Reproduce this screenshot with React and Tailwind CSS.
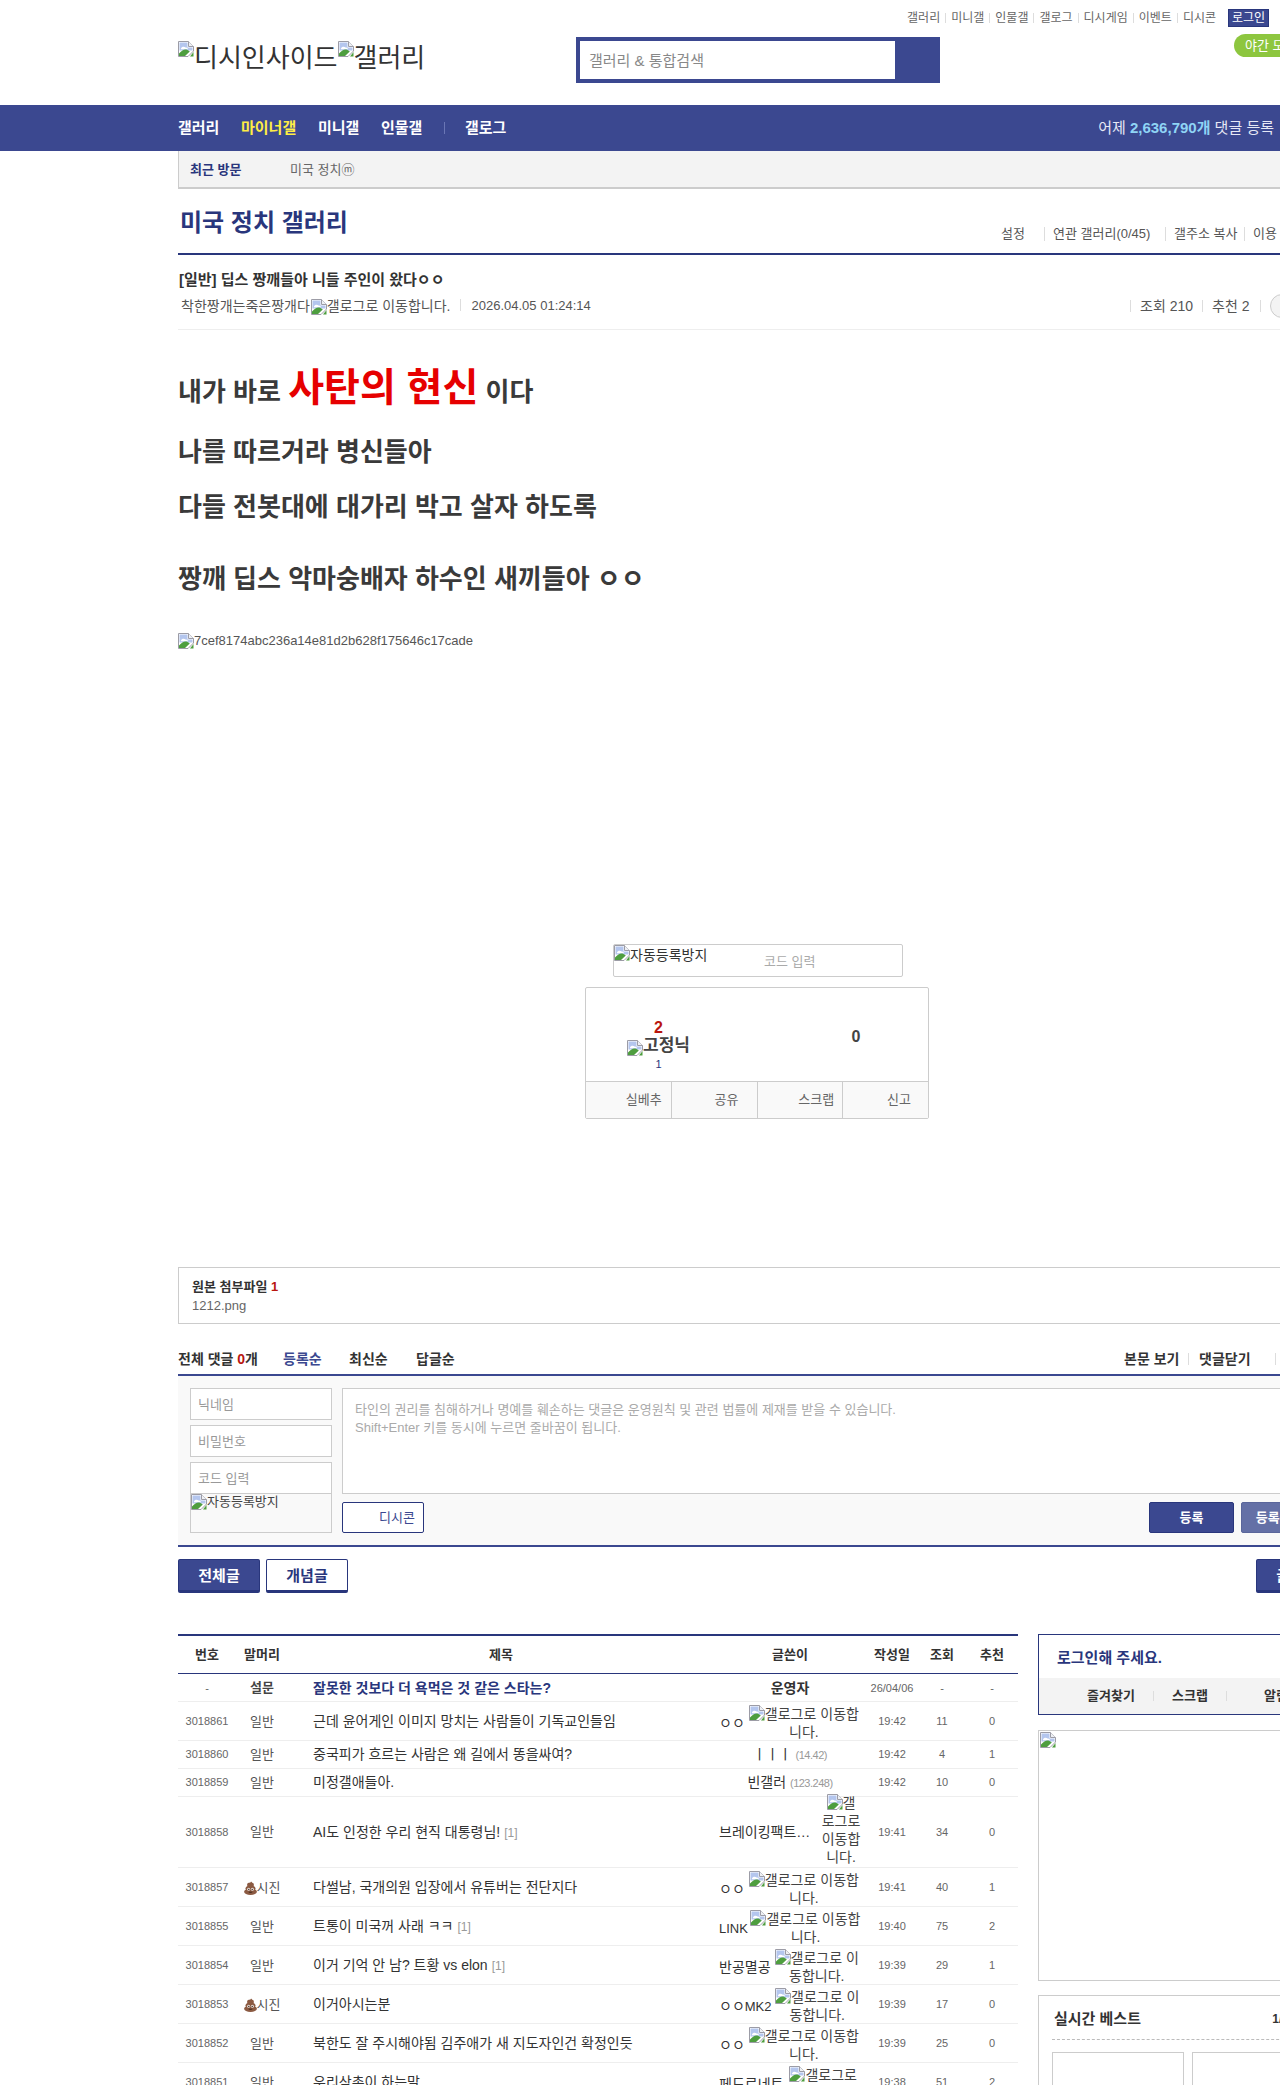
import React from "react";

const Broken = ({ className = "" }) => (
  <svg width="16" height="16" viewBox="0 0 16 16" className={"inline-block align-top " + className}>
    <path d="M0.5 0.5H10.5L15.5 5.5V10L10 15.5H0.5Z" fill="#fff" stroke="#9c9ca6" strokeWidth="1" />
    <path d="M10.5 0.5V5.5H15.5" fill="#eef0f4" stroke="#9c9ca6" strokeWidth="1" />
    <path d="M1.5 1.5H9.5V6.5H14.5V9.5H1.5Z" fill="#b4c6ee" />
    <path d="M3 7.5C3.5 5.5 6.5 5.2 7.5 6.6C9 6.3 10 7.2 9.8 8.2H3Z" fill="#fff" />
    <path d="M1 15V12.6C4 9.2 6 8.2 8.4 8.6C10 9 11 10 11.8 10.6L7 15Z" fill="#4e9e3f" />
    <path d="M15.5 11L12 15.5H15.5Z" fill="#4e9e3f" />
  </svg>
);

const Poop = () => (
  <svg width="13" height="14" viewBox="0 0 13 14" className="inline-block shrink-0">
    <ellipse cx="6.5" cy="10.8" rx="6.4" ry="3.1" fill="#8b5a42" />
    <ellipse cx="6.5" cy="7.4" rx="5" ry="3" fill="#8b5a42" />
    <ellipse cx="6.5" cy="4" rx="3.4" ry="2.4" fill="#8b5a42" />
    <path d="M4.8 3C6 2.6 6.8 1.6 7 0.4C7.9 1 8.6 2 8.4 3.4Z" fill="#8b5a42" />
    <circle cx="4.6" cy="8.2" r="1.5" fill="#e8e2dc" />
    <circle cx="8.4" cy="8.2" r="1.5" fill="#e8e2dc" />
    <circle cx="4.8" cy="8.4" r="0.7" fill="#3b2417" />
    <circle cx="8.2" cy="8.4" r="0.7" fill="#3b2417" />
    <path d="M4.4 10.8H8.6C8.1 12.1 4.9 12.1 4.4 10.8Z" fill="#3b2417" />
  </svg>
);

const Sep = ({ h = "h-[10px]", c = "bg-[#ddd]" }) => <span className={"inline-block w-px shrink-0 " + h + " " + c} />;

const topLinks = ["갤러리", "미니갤", "인물갤", "갤로그", "디시게임", "이벤트", "디시콘"];

const rows = [
  { h: "h-[39px]", num: "3018861", head: "일반", title: "근데 윤어게인 이미지 망치는 사람들이 기독교인들임", nick: "ㅇㅇ", g: true, date: "19:42", v: "11", r: "0" },
  { h: "h-[28px]", num: "3018860", head: "일반", title: "중국피가 흐르는 사람은 왜 길에서 똥을싸여?", nick: "ㅣㅣㅣ", ip: "(14.42)", date: "19:42", v: "4", r: "1" },
  { h: "h-[28px]", num: "3018859", head: "일반", title: "미정갤애들아.", nick: "빈갤러", ip: "(123.248)", date: "19:42", v: "10", r: "0" },
  { h: "h-[71px]", num: "3018858", head: "일반", title: "AI도 인정한 우리 현직 대통령님!", c: "[1]", nick: "브레이킹팩트…", g: true, tall: true, date: "19:41", v: "34", r: "0" },
  { h: "h-[39px]", num: "3018857", head: "시진", poop: true, title: "다썰남, 국개의원 입장에서 유튜버는 전단지다", nick: "ㅇㅇ", g: true, date: "19:41", v: "40", r: "1" },
  { h: "h-[39px]", num: "3018855", head: "일반", title: "트통이 미국꺼 사래 ㅋㅋ", c: "[1]", nick: <span className="text-[13px]">LINK</span>, g: true, date: "19:40", v: "75", r: "2" },
  { h: "h-[39px]", num: "3018854", head: "일반", title: "이거 기억 안 남? 트황 vs elon", c: "[1]", nick: "반공멸공", g: true, date: "19:39", v: "29", r: "1" },
  { h: "h-[39px]", num: "3018853", head: "시진", poop: true, title: "이거아시는분", nick: <>ㅇㅇ<span className="text-[13px]">MK2</span></>, g: true, date: "19:39", v: "17", r: "0" },
  { h: "h-[39px]", num: "3018852", head: "일반", title: "북한도 잘 주시해야됨 김주애가 새 지도자인건 확정인듯", nick: "ㅇㅇ", g: true, date: "19:39", v: "25", r: "0" },
  { h: "h-[39px]", num: "3018851", head: "일반", title: "우리삼촌이 하는말", nick: "페도로네트", g: true, date: "19:38", v: "51", r: "2" },
];

const cols = "grid grid-cols-[58px_52px_426px_152px_52px_48px_52px] items-center";

function Row({ d }) {
  return (
    <div className={cols + " box-border border-b border-[#eee] text-[#555] " + d.h}>
      <div className="text-center text-[11px] text-[#666]">{d.num}</div>
      <div className="flex items-center justify-center text-[13px]">
        {d.poop && <Poop />}
        <span>{d.head}</span>
      </div>
      <div className="pl-[25px] text-[14px] text-[#333] whitespace-nowrap">
        {d.title}
        {d.c && <span className="ml-[4px] text-[12px] text-[#999]">{d.c}</span>}
      </div>
      {d.g ? (
        <div className={"flex items-center pl-[5px] pr-[5px] text-[14px] leading-[18px] text-[#333] " + (d.tall ? "" : "pt-[3px]")}>
          <span className={"shrink-0 whitespace-nowrap " + (d.tall ? "w-[102px] pr-[11px]" : "")}>{d.nick}</span>
          <span className={"min-w-0 flex-1 text-center text-[#444] " + (d.tall ? "-mt-[4px]" : "pl-[2px]")}>
            <Broken />
            갤로그로 이동합니다.
          </span>
        </div>
      ) : (
        <div className="text-center text-[14px] text-[#333] whitespace-nowrap">
          {d.nick} <span className="text-[11px] tracking-[-0.5px] text-[#999]">{d.ip}</span>
        </div>
      )}
      <div className="text-center text-[11px] text-[#666]">{d.date}</div>
      <div className="text-center text-[11px] text-[#666]">{d.v}</div>
      <div className="text-center text-[11px] text-[#666]">{d.r}</div>
    </div>
  );
}

export default function App() {
  return (
    <div className="w-[1280px] h-[2085px] overflow-hidden bg-white text-[#333] [font-family:'Liberation_Sans','Noto_Sans_CJK_KR',sans-serif]">
      {/* Header */}
      <header className="h-[105px] pl-[178px]">
        <div className="h-[34px] flex items-start justify-end pr-[11px] pt-[9px]">
          <div className="flex items-center gap-[5px] text-[12px] text-[#666] leading-[18px]">
            {topLinks.map((t, i) => (
              <React.Fragment key={t}>
                <span>{t}</span>
                {i < topLinks.length - 1 && <Sep />}
              </React.Fragment>
            ))}
            <span className="ml-[7px] box-border h-[18px] w-[41px] border border-[#29367c] bg-[#3b4890] text-center text-white leading-[17px]">로그인</span>
          </div>
        </div>
        <div className="flex items-start w-[1160px]">
          <div className="w-[398px] pt-[7px] text-[26px] leading-[34px] text-[#333] whitespace-nowrap">
            <Broken />디시인사이드<Broken />갤러리
          </div>
          <div className="mt-[3px] box-border flex h-[46px] w-[364px] border-[4px] border-[#3b4890] bg-[#3b4890]">
            <input placeholder="갤러리 & 통합검색" className="h-full w-[315px] bg-white px-[9px] text-[15px] outline-none placeholder:text-[#888]" />
          </div>
          <div className="ml-[294px] flex h-[23px] w-[90px] items-center rounded-full bg-[#8dc63f] pl-[11px] text-[13px] text-white">야간 모드</div>
        </div>
      </header>

      {/* Nav */}
      <nav className="flex h-[46px] items-center bg-[#3b4890] pl-[178px] text-white">
        <div className="flex items-center text-[15px] font-bold">
          <span className="w-[63px]">갤러리</span>
          <span className="w-[77px] text-[#ffed44]">마이너갤</span>
          <span className="w-[63px]">미니갤</span>
          <span className="w-[63px]">인물갤</span>
          <Sep h="h-[12px]" c="bg-[#6a76b5]" />
          <span className="ml-[20px]">갤로그</span>
        </div>
        <div className="ml-auto pr-[6px] text-[15px] text-[#e6e8f5]">
          어제 <b className="text-[#8fd4f5]">2,636,790개</b> 댓글 등록
        </div>
      </nav>

      <main className="w-[1160px] ml-[178px]">
        {/* Recent */}
        <div className="box-border flex h-[38px] items-center border-b-2 border-l border-[#ccc] bg-[#f3f3f3] pl-[11px] pt-[1px] text-[13px]">
          <b className="w-[100px] text-[#29367c]">최근 방문</b>
          <span className="text-[#666]">미국 정치ⓜ</span>
        </div>

        {/* Gallery title */}
        <div className="box-border flex h-[66px] items-start justify-between border-b-2 border-[#29367c]">
          <h2 className="ml-[2px] mt-[15px] text-[24px] font-bold leading-[38px] text-[#29367c]">미국 정치 갤러리</h2>
          <div className="mt-[36px] flex items-center text-[13px] leading-[18px] text-[#555] w-[337px] shrink-0 whitespace-nowrap">
            <span className="w-[43px]">설정</span>
            <Sep h="h-[14px]" />
            <span className="ml-[8px] w-[112px]">연관 갤러리(0/45)</span>
            <Sep h="h-[14px]" />
            <span className="ml-[8px] w-[70px]">갤주소 복사</span>
            <Sep h="h-[14px]" />
            <span className="ml-[8px]">이용 안내</span>
          </div>
        </div>

        {/* Post head */}
        <div className="box-border h-[75px] border-b border-[#eee]">
          <div className="pl-[1px] pt-[15px] text-[15px] font-bold leading-[20px] text-[#333]">[일반] 딥스 짱깨들아 니들 주인이 왔다ㅇㅇ</div>
          <div className="mt-[4px] flex items-center text-[14px] leading-[20px] text-[#555]">
            <span className="pl-[3px] whitespace-nowrap">착한짱개는죽은짱개다<Broken className="ml-[1px] mt-[3px]" />갤로그로 이동합니다.</span>
            <span className="ml-[9px]"><Sep h="h-[12px]" /></span>
            <span className="ml-[11px] text-[13px]">2026.04.05 01:24:14</span>
            <div className="ml-auto flex items-center pr-[8px]">
              <Sep h="h-[12px]" />
              <span className="ml-[9px] w-[62px]">조회 210</span>
              <Sep h="h-[12px]" />
              <span className="ml-[9px] w-[48px]">추천 2</span>
              <Sep h="h-[12px]" />
              <span className="ml-[9px] h-[24px] w-[60px] rounded-full border border-[#ccc] bg-[#f3f3f3]" />
            </div>
          </div>
        </div>

        {/* Content */}
        <article className="pt-[32px] font-bold text-[#3a3a3a]">
          <p className="h-[52px] text-[26px] leading-[52px] whitespace-nowrap">
            내가 바로 <span className="text-[39px] text-[#e60000]">사탄의 현신</span> 이다
          </p>
          <p className="mt-[20px] h-[36px] text-[26px] leading-[36px]">나를 따르거라 병신들아</p>
          <p className="mt-[19px] h-[36px] text-[26px] leading-[36px]">다들 전봇대에 대가리 박고 살자 하도록</p>
          <p className="mt-[36px] h-[36px] text-[26px] leading-[36px]">짱깨 딥스 악마숭배자 하수인 새끼들아 ㅇㅇ</p>
          <div className="mt-[36px] flex h-[16px] items-center text-[13px] font-normal text-[#555]">
            <Broken className="shrink-0" />
            <span>7cef8174abc236a14e81d2b628f175646c17cade</span>
          </div>
        </article>

        {/* Captcha */}
        <div className="ml-[435px] mt-[295px] box-border flex h-[33px] w-[290px] items-start rounded-[2px] border border-[#ccc] text-[14px] leading-[20px]">
          <span className="w-[150px] whitespace-nowrap"><Broken />자동등록방지</span>
          <span className="mt-[7px] text-[13px] text-[#aaa]">코드 입력</span>
        </div>

        {/* Recommend */}
        <div className="ml-[407px] mt-[10px] box-border h-[132px] w-[344px] rounded-[2px] border border-[#ccc]">
          <div className="flex h-[93px] justify-between">
            <div className="flex w-[145px] flex-col items-center pt-[31px]">
              <b className="text-[16px] leading-[18px] text-[#b9160f]">2</b>
              <b className="text-[17px] leading-[18px] text-[#444] whitespace-nowrap"><Broken className="mt-[3px]" />고정닉</b>
              <span className="text-[11px] leading-[16px] text-[#29367c]">1</span>
            </div>
            <div className="w-[144px] pt-[37px] text-center">
              <b className="text-[16px] leading-[18px] text-[#444]">0</b>
            </div>
          </div>
          <div className="flex h-[37px] border-t border-[#ccc] bg-[#f9f9f9] text-right text-[13px] leading-[36px] text-[#666]">
            <span className="w-[86px] border-r border-[#ccc] pr-[9px]">실베추</span>
            <span className="w-[86px] border-r border-[#ccc] pr-[18px]">공유</span>
            <span className="w-[86px] border-r border-[#ccc] pr-[8px]">스크랩</span>
            <span className="w-[85px] pr-[17px]">신고</span>
          </div>
        </div>

        {/* Attachment */}
        <div className="mt-[148px] box-border h-[57px] border border-[#ccc] pl-[13px] pt-[10px]">
          <div className="text-[13px] font-bold leading-[18px]">원본 첨부파일 <span className="text-[#b9160f]">1</span></div>
          <div className="text-[13px] leading-[20px] text-[#666]">1212.png</div>
        </div>

        {/* Comment head */}
        <div className="box-border flex h-[52px] items-start border-b-2 border-[#3b4890] pt-[25px] text-[14px] font-bold leading-[20px]">
          <span className="w-[105px]">전체 댓글 <span className="text-[#b9160f]">0</span>개</span>
          <span className="w-[66px] text-[#3b4890]">등록순</span>
          <span className="w-[67px]">최신순</span>
          <span className="w-[60px]">답글순</span>
          <div className="ml-[648px] flex items-center whitespace-nowrap">
            <span className="w-[64px]">본문 보기</span>
            <Sep h="h-[12px]" />
            <span className="ml-[10px] w-[76px]">댓글닫기</span>
            <Sep h="h-[12px]" />
          </div>
        </div>

        {/* Comment form */}
        <div className="box-border flex h-[171px] border-b-2 border-[#3b4890] bg-[#f9f9f9] pl-[12px] pt-[12px]">
          <div className="w-[142px] shrink-0">
            <input placeholder="닉네임" className="box-border h-[32px] w-full border border-[#ccc] bg-white px-[7px] text-[13px] outline-none placeholder:text-[#999]" />
            <input placeholder="비밀번호" className="mt-[5px] box-border h-[32px] w-full border border-[#ccc] bg-white px-[7px] text-[13px] outline-none placeholder:text-[#999]" />
            <input placeholder="코드 입력" className="mt-[5px] box-border h-[32px] w-full border border-[#ccc] bg-white px-[7px] text-[13px] outline-none placeholder:text-[#999]" />
            <div className="box-border h-[39px] border border-t-0 border-[#ccc] text-[13px] leading-[16px] text-[#444] whitespace-nowrap"><Broken />자동등록방지</div>
          </div>
          <div className="ml-[10px] w-[984px] shrink-0">
            <textarea
              readOnly
              placeholder={"타인의 권리를 침해하거나 명예를 훼손하는 댓글은 운영원칙 및 관련 법률에 제재를 받을 수 있습니다.\nShift+Enter 키를 동시에 누르면 줄바꿈이 됩니다."}
              className="box-border block h-[106px] w-full resize-none border border-[#ccc] bg-white px-[12px] py-[12px] text-[13px] leading-[18px] outline-none placeholder:text-[#aaa]"
            />
            <div className="mt-[8px] flex h-[31px] items-stretch">
              <span className="box-border w-[82px] rounded-[2px] border border-[#29367c] bg-white pr-[8px] text-right text-[13px] leading-[29px] text-[#3b4890]">디시콘</span>
              <span className="ml-auto box-border w-[85px] rounded-[2px] border border-[#29367c] bg-[#3b4890] text-center text-[13px] font-bold leading-[29px] text-white">등록</span>
              <span className="ml-[7px] box-border w-[85px] rounded-[2px] border border-[#5a669b] bg-[#6470a6] text-center text-[13px] font-bold leading-[29px] text-white">등록+추천</span>
            </div>
          </div>
        </div>

        {/* Tab buttons */}
        <div className="mt-[12px] flex h-[34px] text-[15px] font-bold">
          <span className="box-border w-[82px] rounded-[2px] border border-b-[3px] border-[#29367c] bg-[#3b4890] text-center leading-[31px] text-white">전체글</span>
          <span className="ml-[6px] box-border w-[82px] rounded-[2px] border border-b-[3px] border-[#29367c] bg-white text-center leading-[31px] text-[#29367c]">개념글</span>
          <span className="ml-[908px] box-border w-[82px] rounded-[2px] border border-b-[3px] border-[#29367c] bg-[#3b4890] text-center leading-[31px] text-white">글쓰기</span>
        </div>

        {/* List + aside */}
        <div className="mt-[41px] flex items-start">
          <section className="w-[840px] shrink-0">
            <div className={cols + " box-border h-[40px] border-t-2 border-b border-t-[#29367c] border-b-[#29367c] text-center text-[13px] font-bold text-[#333]"}>
              <span>번호</span>
              <span>말머리</span>
              <span>제목</span>
              <span>글쓴이</span>
              <span>작성일</span>
              <span>조회</span>
              <span>추천</span>
            </div>
            <div className={cols + " box-border h-[28px] border-b border-[#eee] pt-[1px]"}>
              <span className="text-center text-[11px] text-[#666]">-</span>
              <b className="text-center text-[13px] text-[#444]">설문</b>
              <b className="pl-[25px] text-[14px] text-[#29367c] whitespace-nowrap">잘못한 것보다 더 욕먹은 것 같은 스타는?</b>
              <b className="text-center text-[14px] text-[#333]">운영자</b>
              <span className="text-center text-[11px] text-[#666]">26/04/06</span>
              <span className="text-center text-[11px] text-[#666]">-</span>
              <span className="text-center text-[11px] text-[#666]">-</span>
            </div>
            {rows.map((d) => (
              <Row key={d.num} d={d} />
            ))}
          </section>

          <aside className="ml-[20px] w-[300px] shrink-0">
            <div className="box-border h-[81px] border border-[#29367c]">
              <div className="h-[43px] pl-[18px] pt-[12px] text-[15px] font-bold leading-[22px] text-[#29367c]">로그인해 주세요.</div>
              <div className="flex h-[36px] items-center bg-[#f3f3f3] text-[13px] font-bold text-[#333]">
                <span className="ml-[48px] w-[66px]">즐겨찾기</span>
                <Sep h="h-[10px]" />
                <span className="ml-[18px] w-[54px]">스크랩</span>
                <Sep h="h-[10px]" />
                <span className="ml-[37px]">알림</span>
              </div>
            </div>
            <div className="mt-[15px] box-border h-[251px] border border-[#ccc] pl-[1px] pt-[1px]">
              <Broken className="block" />
            </div>
            <div className="mt-[14px] box-border border border-[#ccc] px-[13px]">
              <div className="flex h-[44px] items-center justify-between border-b border-dashed border-[#bbb] pl-[2px] pr-[35px] pt-[3px] font-bold">
                <span className="text-[15px]">실시간 베스트</span>
                <span className="text-[12px]">1/4</span>
              </div>
              <div className="mt-[12px] flex gap-[8px]">
                <div className="h-[120px] w-[132px] border border-[#ccc]" />
                <div className="h-[120px] w-[132px] border border-[#ccc]" />
              </div>
            </div>
          </aside>
        </div>
      </main>
    </div>
  );
}
